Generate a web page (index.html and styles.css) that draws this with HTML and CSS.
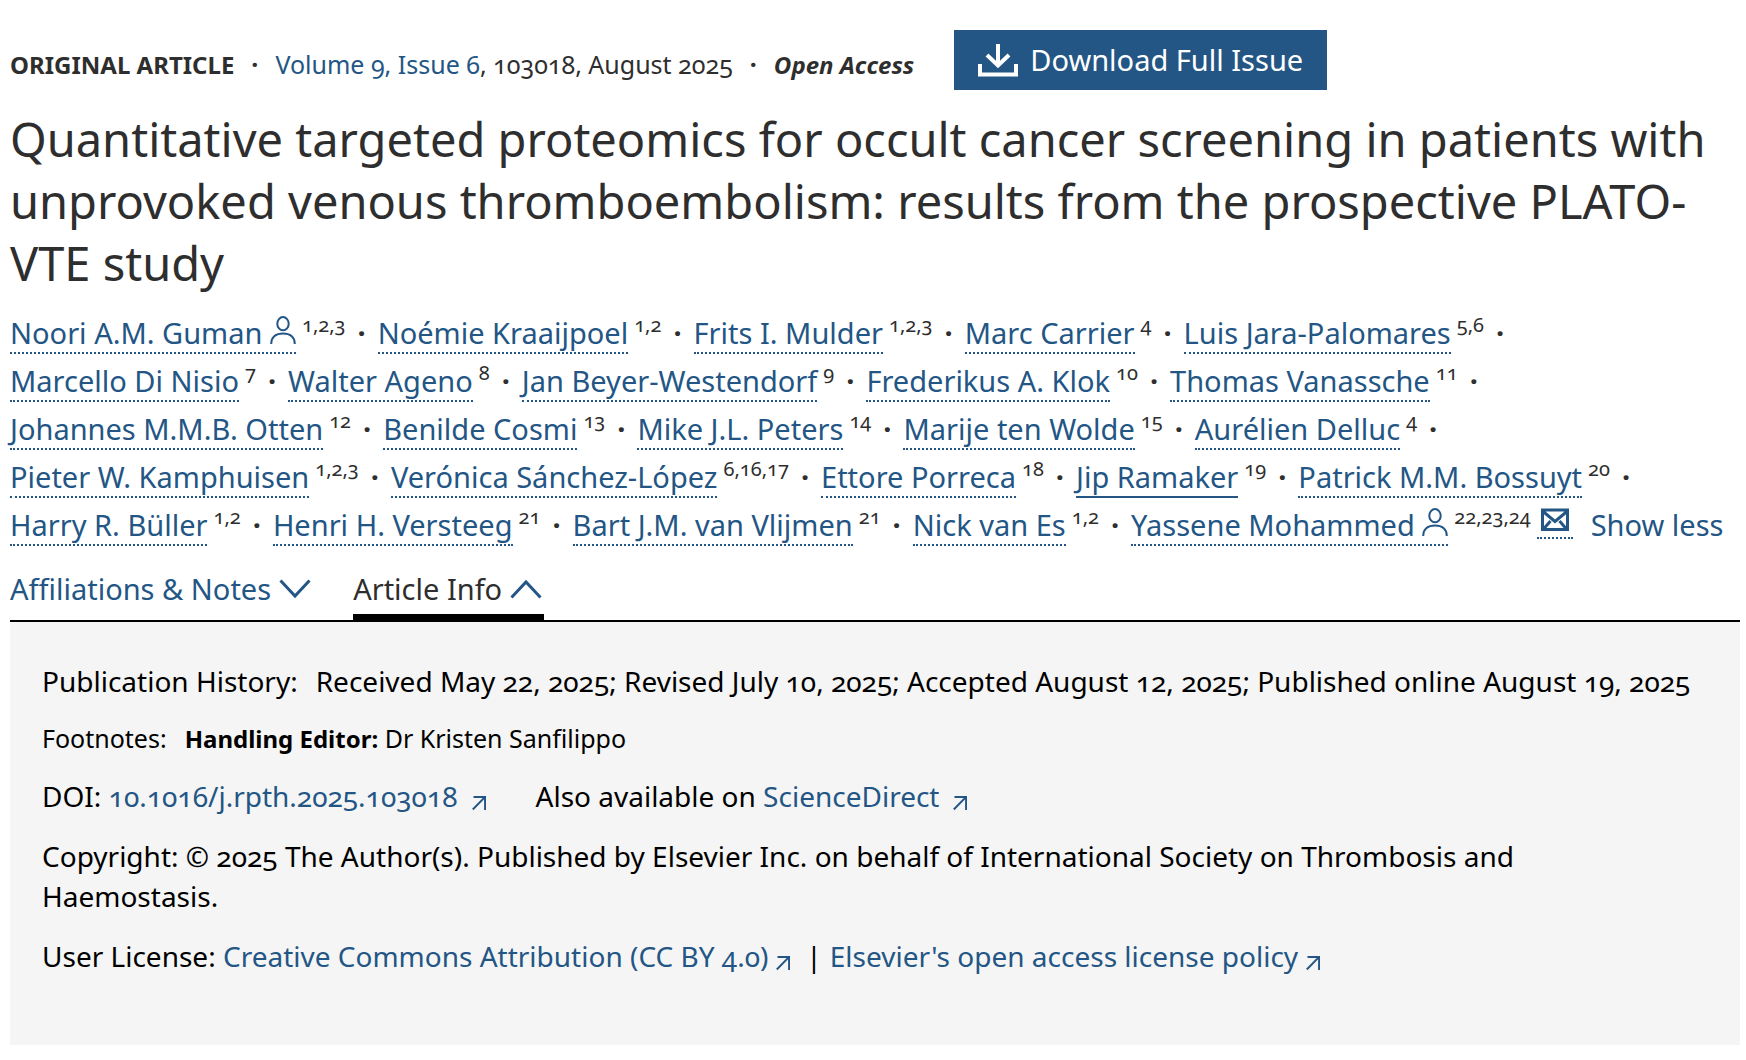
FILE: index.html
```html
<!DOCTYPE html>
<html lang="en">
<head>
<meta charset="utf-8">
<meta name="viewport" content="width=device-width, initial-scale=1">
<title>Quantitative targeted proteomics for occult cancer screening</title>
<link rel="stylesheet" href="styles.css">
</head>
<body>
<svg class="sprite" aria-hidden="true">
  <symbol id="person" viewBox="0 0 26 28"><ellipse cx="13" cy="7.7" rx="5.700" ry="6.600"/><path d="M1.200 28C1.200 21 6 17.500 13 17.500S24.800 21 24.800 28"/></symbol>
  <symbol id="down" viewBox="0 0 32 20"><path d="M1.500 1.500 16 17 30.500 1.500"/></symbol>
  <symbol id="up" viewBox="0 0 32 20"><path d="M1.500 18.500 16 3 30.500 18.500"/></symbol>
  <symbol id="arrow" viewBox="0 0 14 14"><path d="M1.500 .9H13.100V14M13.100 .9 .8 13.500"/></symbol>
</svg>
<main class="article">
  <div class="topbar">
    <p class="meta">
      <strong>ORIGINAL ARTICLE</strong><span class="sep">·</span><span><a href="#issue">Volume 9, Issue 6</a>, 103018, August 2025</span><span class="sep">·</span><strong><em>Open Access</em></strong>
    </p>
    <button class="download" type="button">
      <svg viewBox="0 0 40 33" aria-hidden="true"><path d="M2 20V30.500H38V20M20 0V20M9 11 20 21.500 31 11"/></svg>
      Download Full Issue
    </button>
  </div>

  <h1>Quantitative targeted proteomics for occult cancer screening in patients with unprovoked venous thromboembolism: results from the prospective PLATO-VTE study</h1>

  <ul class="authors">
    <li><a href="#a1">Noori A.M. Guman <svg class="person" aria-hidden="true"><use href="#person"/></svg></a><sup>1,2,3</sup></li>
    <li><a href="#a2">Noémie Kraaijpoel</a><sup>1,2</sup></li>
    <li><a href="#a3">Frits I. Mulder</a><sup>1,2,3</sup></li>
    <li><a href="#a4">Marc Carrier</a><sup>4</sup></li>
    <li><a href="#a5">Luis Jara-Palomares</a><sup>5,6</sup></li>
    <li><a href="#a6">Marcello Di Nisio</a><sup>7</sup></li>
    <li><a href="#a7">Walter Ageno</a><sup>8</sup></li>
    <li><a href="#a8">Jan Beyer-Westendorf</a><sup>9</sup></li>
    <li><a href="#a9">Frederikus A. Klok</a><sup>10</sup></li>
    <li><a href="#a10">Thomas Vanassche</a><sup>11</sup></li>
    <li><a href="#a11">Johannes M.M.B. Otten</a><sup>12</sup></li>
    <li><a href="#a12">Benilde Cosmi</a><sup>13</sup></li>
    <li><a href="#a13">Mike J.L. Peters</a><sup>14</sup></li>
    <li><a href="#a14">Marije ten Wolde</a><sup>15</sup></li>
    <li><a href="#a15">Aurélien Delluc</a><sup>4</sup></li>
    <li><a href="#a16">Pieter W. Kamphuisen</a><sup>1,2,3</sup></li>
    <li><a href="#a17">Verónica Sánchez-López</a><sup>6,16,17</sup></li>
    <li><a href="#a18">Ettore Porreca</a><sup>18</sup></li>
    <li><a class="current" href="#a19">Jip Ramaker</a><sup>19</sup></li>
    <li><a href="#a20">Patrick M.M. Bossuyt</a><sup>20</sup></li>
    <li><a href="#a21">Harry R. Büller</a><sup>1,2</sup></li>
    <li><a href="#a22">Henri H. Versteeg</a><sup>21</sup></li>
    <li><a href="#a23">Bart J.M. van Vlijmen</a><sup>21</sup></li>
    <li><a href="#a24">Nick van Es</a><sup>1,2</sup></li>
    <li><a href="#a25">Yassene Mohammed <svg class="person" aria-hidden="true"><use href="#person"/></svg></a><sup>22,23,24</sup><a class="mail" href="#mail" aria-label="Email author"><svg viewBox="0 0 28 24" aria-hidden="true"><path d="M1.500 2H26.500V21.500H1.500ZM1.500 3 14 13.500 26.500 3M3 20.500 9.500 13M25 20.500 18.500 13"/></svg></a><button class="less" type="button">Show less</button></li>
  </ul>

  <div class="tabs">
    <button type="button" aria-expanded="false">Affiliations &amp; Notes <svg aria-hidden="true"><use href="#down"/></svg></button>
    <button class="active" type="button" aria-expanded="true">Article Info <svg aria-hidden="true"><use href="#up"/></svg></button>
  </div>

  <section class="info">
    <p><span class="label">Publication History:</span>Received May 22, 2025; Revised July 10, 2025; Accepted August 12, 2025; Published online August 19, 2025</p>
    <p class="note"><span class="label">Footnotes:</span><strong>Handling Editor:</strong> Dr Kristen Sanfilippo</p>
    <p><span class="doi">DOI: <a href="#doi">10.1016/j.rpth.2025.103018<svg class="out wide" aria-hidden="true"><use href="#arrow"/></svg></a></span>Also available on <a href="#sd">ScienceDirect<svg class="out wide" aria-hidden="true"><use href="#arrow"/></svg></a></p>
    <p>Copyright: © 2025 The Author(s). Published by Elsevier Inc. on behalf of International Society on Thrombosis and<br>Haemostasis.</p>
    <p>User License: <a href="#cc">Creative Commons Attribution (CC BY 4.0)<svg class="out" aria-hidden="true"><use href="#arrow"/></svg></a><span class="bar">|</span><a href="#policy">Elsevier's open access license policy<svg class="out" aria-hidden="true"><use href="#arrow"/></svg></a></p>
  </section>
</main>
</body>
</html>
```
FILE: styles.css
```css
:root {
  --link: #235685;
  --text: #2e2e2e;
}

* {
  box-sizing: border-box;
}

body {
  margin: 0;
  background: #fff;
  color: var(--text);
  font-family: "Noto Sans", "Open Sans", sans-serif;
  font-variant-numeric: oldstyle-nums;
}

p, h1, ul {
  margin: 0;
}

a {
  color: var(--link);
  text-decoration: none;
}

button {
  padding: 0;
  border: 0;
  background: none;
  color: var(--link);
  font: inherit;
  cursor: pointer;
}

svg {
  fill: none;
  stroke: currentColor;
  stroke-width: 3;
}

strong {
  font-size: 24px;
}

.sprite {
  position: absolute;
  width: 0;
  height: 0;
}

.article {
  padding: 30px 6px 16px 10px;
}

.topbar {
  display: flex;
  flex-wrap: wrap;
  align-items: center;
  gap: 40px;
}

.meta {
  display: flex;
  flex-wrap: wrap;
  align-items: baseline;
  gap: 17px;
  padding-top: 8px;
  font-size: 25px;
  line-height: 34px;
}

.sep {
  font-weight: 700;
}

.download {
  display: flex;
  align-items: center;
  gap: 12px;
  padding: 10px 24px;
  background: var(--link);
  color: #fff;
  font-size: 29px;
  line-height: 40px;
}

.download svg {
  width: 40px;
  height: 33px;
  stroke-width: 4;
}

h1 {
  padding-top: 18px;
  font-size: 47px;
  font-weight: 400;
  line-height: 62px;
}

.authors {
  display: flex;
  flex-wrap: wrap;
  padding: 15px 0 0;
  font-size: 29px;
  line-height: 48px;
  list-style: none;
}

.authors li {
  white-space: nowrap;
}

.authors li:not(:last-child)::after {
  content: "·";
  padding: 0 12px;
  font-weight: 700;
}

.authors a {
  border-bottom: 2px dotted var(--link);
}

.authors .current {
  border-bottom-style: solid;
}

.authors sup {
  padding-left: 6px;
  font-size: 20px;
  line-height: 0;
  vertical-align: 12px;
}

.person {
  width: 26px;
  height: 28px;
  stroke-width: 2;
}

.authors .mail {
  display: inline-block;
  margin: 0 18px 0 6px;
  padding: 0 4px 5px;
  line-height: 0;
  vertical-align: 4px;
}

.mail svg {
  width: 28px;
  height: 24px;
}

.tabs {
  display: flex;
  gap: 40px;
  padding-top: 20px;
  border-bottom: 2px solid #000;
  font-size: 29px;
  line-height: 40px;
}

.tabs button {
  display: flex;
  align-items: center;
  gap: 8px;
  padding: 0 2px 5px 0;
  border-bottom: 6px solid transparent;
}

.tabs .active {
  border-color: #000;
  color: var(--text);
}

.tabs svg {
  width: 32px;
  height: 20px;
  color: var(--link);
}

.info {
  display: flex;
  flex-direction: column;
  gap: 20px;
  padding: 39px 32px 69px;
  background: #f5f5f5;
  color: #000;
  font-size: 28px;
  line-height: 40px;
}

.note {
  font-size: 25px;
  line-height: 34px;
}

.label {
  margin-right: 18px;
}

.doi {
  margin-right: 50px;
}

.out {
  width: 14px;
  height: 14px;
  margin-left: 8px;
  stroke-width: 2;
  vertical-align: -3px;
}

.out.wide {
  margin-left: 14px;
}

.bar {
  margin: 0 8px 0 16px;
}
```
